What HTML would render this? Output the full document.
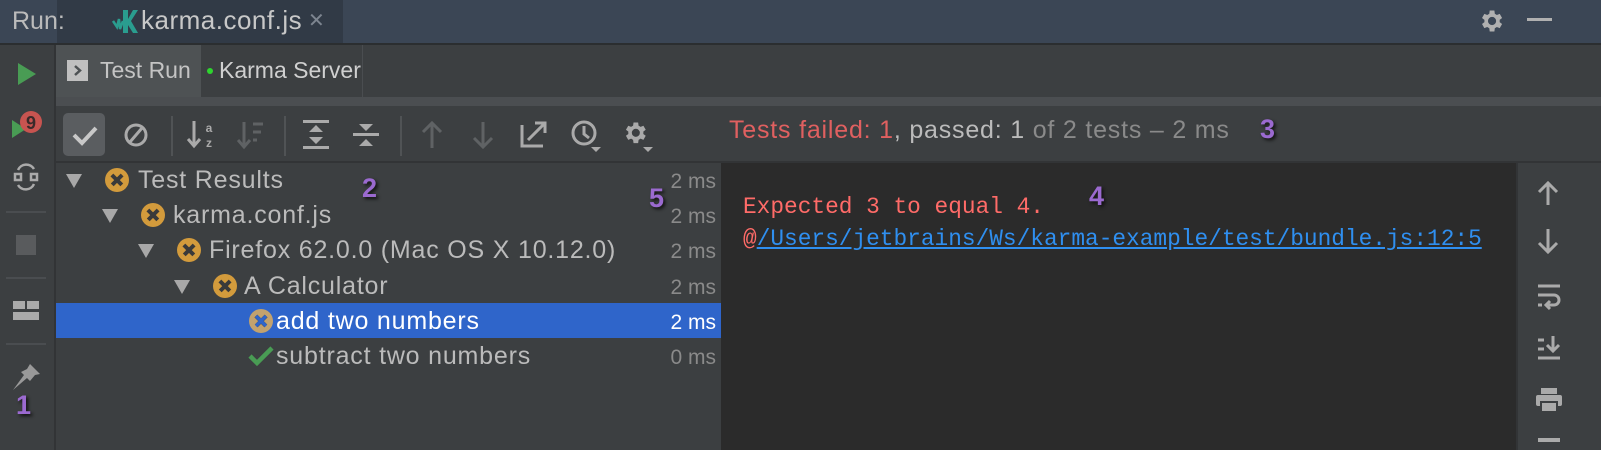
<!DOCTYPE html>
<html><head><meta charset="utf-8"><style>
*{margin:0;padding:0;box-sizing:border-box}
body{width:1601px;height:450px;overflow:hidden;background:#3c3f41;font-family:"Liberation Sans",sans-serif;position:relative}
.a{position:absolute}
.t{color:#bbbbbb;font-size:25px;letter-spacing:0.8px;white-space:nowrap}
.ms{color:#8a8a8a;font-size:21px;position:absolute;right:885px;white-space:nowrap}
.num{color:#9b6ad0;font-weight:bold;font-size:27px;text-shadow:2px 2px 3px #111}
.x{position:absolute;width:24px;height:24px;border-radius:50%;background:#d39b3c}
.x:before,.x:after{content:"";position:absolute;left:5px;top:10px;width:14px;height:3.5px;background:#3a3a3a;transform:rotate(45deg)}
.x:after{transform:rotate(-45deg)}
.tri{position:absolute;width:0;height:0;border-left:8px solid transparent;border-right:8px solid transparent;border-top:14px solid #a8a8a8}
</style></head><body>
<!-- top bar -->
<div class="a" style="left:0;top:0;width:1601px;height:43px;background:#3b4655"></div>
<div class="a" style="left:57px;top:0;width:286px;height:43px;background:#313a46"></div>
<div class="a" style="left:12px;top:7px;font-size:25px;color:#bbb">Run:</div>
<svg class="a" style="left:112px;top:7px" width="26" height="28"><path d="M1 14 L5 20 L7 12 L8 22 L11 14" stroke="#2a9d8f" stroke-width="2.5" fill="none"/><path d="M11 3 H16 V12 L21 3 H26 L19 14 L26 26 H21 L16 18 V26 H11Z" fill="#2a9d8f"/></svg>
<div class="a" style="left:141px;top:5px;font-size:26px;letter-spacing:0.5px;color:#c8c8c8">karma.conf.js</div>
<div class="a" style="left:308px;top:8px;font-size:20px;color:#7d8590">✕</div>
<svg class="a" style="left:1477px;top:7px" width="28" height="28" viewBox="0 0 24 24"><path fill="#b0b0b0" d="M19.4 13a7.5 7.5 0 0 0 0-2l2.1-1.6-2-3.5-2.5 1a7 7 0 0 0-1.7-1L14.9 3h-4l-.4 2.9a7 7 0 0 0-1.7 1l-2.5-1-2 3.5L6.4 11a7.5 7.5 0 0 0 0 2l-2.1 1.6 2 3.5 2.5-1a7 7 0 0 0 1.7 1l.4 2.9h4l.4-2.9a7 7 0 0 0 1.7-1l2.5 1 2-3.5zM12.9 15.5a3.5 3.5 0 1 1 0-7 3.5 3.5 0 0 1 0 7z"/></svg>
<div class="a" style="left:1527px;top:18px;width:25px;height:3px;background:#b0b0b0"></div>
<div class="a" style="left:0;top:43px;width:1601px;height:2px;background:#2b2e30"></div>
<!-- left toolbar -->
<div class="a" style="left:54px;top:45px;width:2px;height:405px;background:#323436"></div>
<svg class="a" style="left:16px;top:62px" width="22" height="24"><path d="M2 1 L20 12 L2 23Z" fill="#499c54"/></svg>
<svg class="a" style="left:10px;top:108px" width="34" height="34"><path d="M2 12 L16 21 L2 30Z" fill="#499c54"/><circle cx="21" cy="14" r="11" fill="#c75450"/><text x="21" y="21" text-anchor="middle" font-family="Liberation Sans" font-weight="bold" font-size="18" fill="#3a2a2a">9</text></svg>
<svg class="a" style="left:12px;top:162px" width="28" height="30" fill="none" stroke="#aaa" stroke-width="2.5"><path d="M6 8 A9 9 0 0 1 22 7"/><path d="M22 22 A9 9 0 0 1 6 23"/><rect x="3" y="12" width="6" height="6"/><rect x="19" y="12" width="6" height="6"/></svg>
<div class="a" style="left:6px;top:211px;width:40px;height:2px;background:#4a4d50"></div>
<div class="a" style="left:16px;top:235px;width:20px;height:20px;background:#595b5d"></div>
<div class="a" style="left:6px;top:277px;width:40px;height:2px;background:#4a4d50"></div>
<svg class="a" style="left:13px;top:300px" width="26" height="22" fill="#aaa"><rect x="0" y="1" width="12" height="8"/><rect x="14" y="1" width="12" height="8"/><rect x="0" y="12" width="26" height="8"/></svg>
<div class="a" style="left:6px;top:343px;width:40px;height:2px;background:#4a4d50"></div>
<svg class="a" style="left:10px;top:362px" width="32" height="30"><path d="M20 2 L30 12 L25 13 L20 19 L17 16 L3 28 L14 13 L11 10 L17 7Z" fill="#999"/></svg>
<div class="a num" style="left:16px;top:390px">1</div>
<!-- tab bar -->
<div class="a" style="left:56px;top:45px;width:1545px;height:52px;background:#3c3f41"></div>
<div class="a" style="left:56px;top:45px;width:145px;height:52px;background:#4e5254"></div>
<div class="a" style="left:362px;top:45px;width:1px;height:52px;background:#4a4d50"></div>
<div class="a" style="left:67px;top:60px;width:21px;height:21px;background:#c0c0c0"></div>
<svg class="a" style="left:67px;top:60px" width="21" height="21"><path d="M8 6 L13 10.5 L8 15" stroke="#4e5254" stroke-width="2.5" fill="none"/></svg>
<div class="a" style="left:100px;top:57px;font-size:23px;color:#c4c4c4;white-space:nowrap">Test Run</div>
<div class="a" style="left:207px;top:68px;width:6px;height:6px;border-radius:50%;background:#2ed52e"></div>
<div class="a" style="left:219px;top:57px;font-size:23px;color:#d0d0d0;white-space:nowrap">Karma Server</div>
<div class="a" style="left:56px;top:97px;width:1545px;height:9px;background:#4b4e51"></div>
<!-- toolbar -->
<div class="a" style="left:56px;top:106px;width:1545px;height:56px;background:#3c3f41"></div>
<div class="a" style="left:63px;top:113px;width:42px;height:43px;border-radius:5px;background:#5a5d60"></div>
<svg class="a" style="left:70px;top:120px" width="30" height="30"><path d="M4 15 L12 23 L26 8" stroke="#c8c8c8" stroke-width="4" fill="none"/></svg>
<svg class="a" style="left:122px;top:121px" width="28" height="28" fill="none" stroke="#aaa" stroke-width="3"><circle cx="14" cy="14" r="10"/><path d="M8 21 L20 7"/></svg>
<div class="a" style="left:171px;top:116px;width:2px;height:40px;background:#505355"></div>
<div class="a" style="left:284px;top:116px;width:2px;height:40px;background:#505355"></div>
<div class="a" style="left:400px;top:116px;width:2px;height:40px;background:#505355"></div>
<svg class="a" style="left:187px;top:119px" width="30" height="32"><path d="M7 2 V26 M1 20 L7 27 L13 20" stroke="#aaa" stroke-width="3" fill="none"/><text x="22" y="13" font-size="12" font-family="Liberation Sans" font-weight="bold" fill="#aaa" text-anchor="middle">a</text><text x="22" y="28" font-size="12" font-family="Liberation Sans" font-weight="bold" fill="#aaa" text-anchor="middle">z</text></svg>
<svg class="a" style="left:237px;top:121px" width="30" height="30"><path d="M7 1 V25 M1 19 L7 26 L13 19" stroke="#5f6264" stroke-width="3" fill="none"/><path d="M16 3 H26 M16 11 H24 M16 19 H20" stroke="#5f6264" stroke-width="3"/></svg>
<svg class="a" style="left:303px;top:120px" width="26" height="30" fill="#aaa"><rect x="0" y="0" width="26" height="3"/><rect x="0" y="26" width="26" height="3"/><path d="M13 5 L20 12 H6Z M13 24 L20 17 H6Z"/></svg>
<svg class="a" style="left:353px;top:120px" width="26" height="30" fill="#aaa"><rect x="0" y="13" width="26" height="3"/><path d="M6 4 H20 L13 11Z M6 26 H20 L13 19Z"/></svg>
<svg class="a" style="left:420px;top:120px" width="24" height="30"><path d="M12 28 V3 M3 12 L12 3 L21 12" stroke="#5f6264" stroke-width="3" fill="none"/></svg>
<svg class="a" style="left:471px;top:120px" width="24" height="30"><path d="M12 2 V27 M3 18 L12 27 L21 18" stroke="#5f6264" stroke-width="3" fill="none"/></svg>
<svg class="a" style="left:519px;top:119px" width="30" height="30" fill="none" stroke="#aaa" stroke-width="3"><path d="M3 6 V27 H24"/><path d="M9 21 L26 4 M16 4 H26 V14"/></svg>
<svg class="a" style="left:569px;top:118px" width="34" height="36"><circle cx="15" cy="15" r="11" fill="none" stroke="#aaa" stroke-width="3"/><path d="M15 8 V16 L20 20" stroke="#aaa" stroke-width="3" fill="none"/><path d="M22 29 H32 L27 34Z" fill="#aaa"/></svg>
<svg class="a" style="left:620px;top:118px" width="36" height="36"><g transform="translate(1,1) scale(1.15)"><path fill="#aaa" d="M19.4 13a7.5 7.5 0 0 0 0-2l2.1-1.6-2-3.5-2.5 1a7 7 0 0 0-1.7-1L14.9 3h-4l-.4 2.9a7 7 0 0 0-1.7 1l-2.5-1-2 3.5L6.4 11a7.5 7.5 0 0 0 0 2l-2.1 1.6 2 3.5 2.5-1a7 7 0 0 0 1.7 1l.4 2.9h4l.4-2.9a7 7 0 0 0 1.7-1l2.5 1 2-3.5zM12.9 15.5a3.5 3.5 0 1 1 0-7 3.5 3.5 0 0 1 0 7z"/></g><path d="M23 29 H33 L28 34Z" fill="#aaa"/></svg>
<div class="a t" style="left:729px;top:116px"><span style="color:#e06060">Tests failed: 1</span><span style="color:#bbb">, passed: 1</span><span style="color:#8a8a8a"> of 2 tests – 2 ms</span></div>
<div class="a num" style="left:1260px;top:114px">3</div>
<div class="a" style="left:56px;top:161px;width:1545px;height:2px;background:#323436"></div>
<!-- tree -->
<div class="a" style="left:56px;top:303px;width:665px;height:35px;background:#2f65ca"></div>
<div class="tri" style="left:66px;top:174px"></div>
<div class="x" style="left:105px;top:168px"></div>
<div class="a t" style="left:138px;top:166px">Test Results</div>
<div class="tri" style="left:102px;top:209px"></div>
<div class="x" style="left:141px;top:203px"></div>
<div class="a t" style="left:173px;top:201px">karma.conf.js</div>
<div class="tri" style="left:138px;top:244px"></div>
<div class="x" style="left:177px;top:238px"></div>
<div class="a t" style="left:209px;top:236px">Firefox 62.0.0 (Mac OS X 10.12.0)</div>
<div class="tri" style="left:174px;top:280px"></div>
<div class="x" style="left:213px;top:274px"></div>
<div class="a t" style="left:244px;top:272px">A Calculator</div>
<div class="x" style="left:249px;top:309px;background:#c2a26e"></div>
<svg class="a" style="left:249px;top:309px" width="24" height="24"><path d="M7 7 L17 17 M17 7 L7 17" stroke="#2f65ca" stroke-width="3.5"/></svg>
<div class="a t" style="left:276px;top:307px;color:#fff">add two numbers</div>
<svg class="a" style="left:248px;top:345px" width="26" height="22"><path d="M2 11 L9 18 L24 3" stroke="#499c54" stroke-width="4.5" fill="none"/></svg>
<div class="a t" style="left:276px;top:342px">subtract two numbers</div>
<div class="ms" style="top:170px">2 ms</div>
<div class="ms" style="top:205px">2 ms</div>
<div class="ms" style="top:240px">2 ms</div>
<div class="ms" style="top:276px">2 ms</div>
<div class="ms" style="top:311px;color:#fff">2 ms</div>
<div class="ms" style="top:346px">0 ms</div>
<div class="a num" style="left:362px;top:173px">2</div>
<div class="a num" style="left:649px;top:183px">5</div>
<!-- console -->
<div class="a" style="left:721px;top:163px;width:796px;height:287px;background:#2b2b2b"></div>
<div class="a" style="left:1516px;top:163px;width:2px;height:287px;background:#323436"></div>
<div class="a" style="left:743px;top:194px;font-family:'Liberation Mono',monospace;font-size:22.8px;color:#ff6b68;white-space:nowrap">Expected 3 to equal 4.</div>
<div class="a" style="left:743px;top:226px;font-family:'Liberation Mono',monospace;font-size:22.8px;color:#ff6b68;white-space:nowrap">@<span style="color:#2f8ff0;text-decoration:underline">/Users/jetbrains/Ws/karma-example/test/bundle.js:12:5</span></div>
<div class="a num" style="left:1089px;top:181px">4</div>
<!-- right toolbar -->
<svg class="a" style="left:1536px;top:180px" width="24" height="26"><path d="M12 25 V3 M3 12 L12 3 L21 12" stroke="#aaa" stroke-width="3" fill="none"/></svg>
<svg class="a" style="left:1536px;top:228px" width="24" height="28"><path d="M12 1 V24 M3 15 L12 24 L21 15" stroke="#aaa" stroke-width="3" fill="none"/></svg>
<svg class="a" style="left:1536px;top:284px" width="26" height="30" fill="none" stroke="#aaa" stroke-width="3"><path d="M2 2 H24 M2 11 H18 A5 5 0 0 1 18 21 H12"/><path d="M14 17 L10 21 L14 25" /><path d="M2 21 H6"/></svg>
<svg class="a" style="left:1536px;top:334px" width="26" height="26" fill="none" stroke="#aaa" stroke-width="3"><path d="M2 24 H24 M2 6 H8 M2 15 H8 M17 2 V16 M11 11 L17 17 L23 11"/></svg>
<svg class="a" style="left:1536px;top:388px" width="26" height="26" fill="#aaa"><rect x="5" y="0" width="16" height="6"/><rect x="0" y="7" width="26" height="11" rx="2"/><rect x="5" y="14" width="16" height="10" fill="#aaa" stroke="#3c3f41" stroke-width="2"/></svg>
<div class="a" style="left:1538px;top:438px;width:22px;height:4px;background:#aaa"></div>
</body></html>
